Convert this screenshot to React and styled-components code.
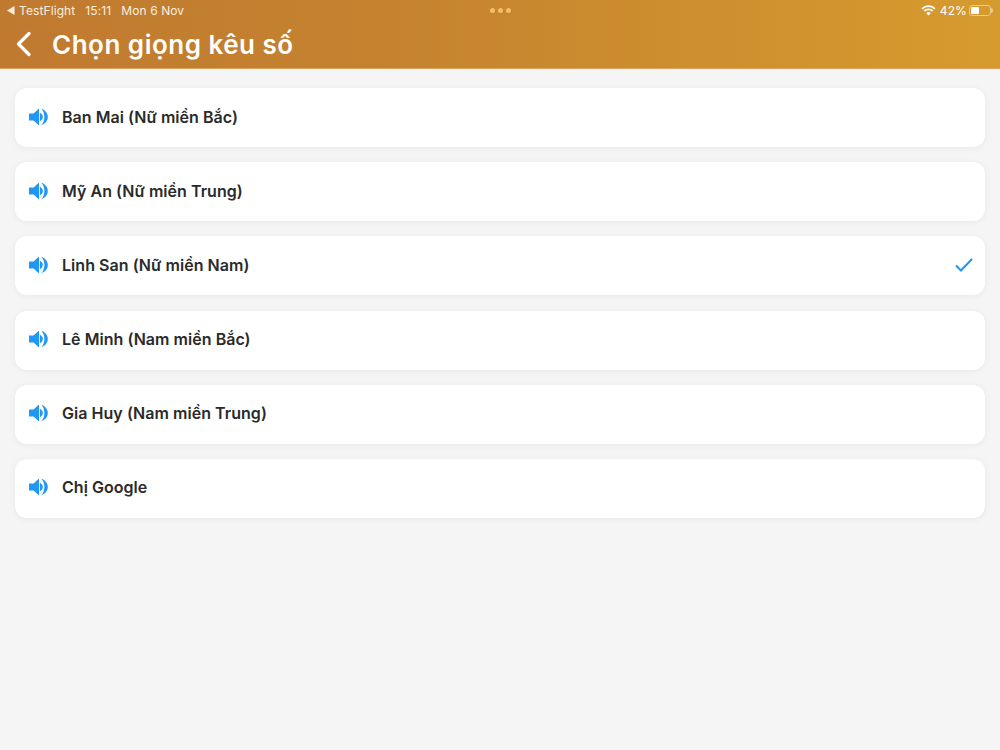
import styled, { createGlobalStyle } from 'styled-components';

const GlobalStyle = createGlobalStyle`
	html, body {
		margin: 0;
		padding: 0;
		background: #f4f4f4;
	}
	body {
		font-family: Inter, "Noto Sans", "Liberation Sans", sans-serif;
	}
`;

const Page = styled.div`
	width: 1000px;
	height: 750px;
	overflow: hidden;
	background: #f5f5f5;
`;

const Header = styled.header`
	height: 69px;
	box-sizing: border-box;
	background: linear-gradient(90deg, #c07a30 0%, #c5832f 40%, #d69b2e 100%);
	color: #fff;
	border-bottom: 1px solid #dca25f;
`;

const StatusBar = styled.div`
	height: 20px;
	padding: 0 7px 0 7px;
	display: grid;
	grid-template-columns: 1fr auto 1fr;
	align-items: center;
	font-size: 12px;
	letter-spacing: 0.1px;
	color: #fbeedd;
`;

const StatusLeft = styled.div`
	display: flex;
	align-items: center;
`;

const BackApp = styled.span`
	display: flex;
	align-items: center;
	gap: 4px;
	margin-right: 10px;
`;

const TimeText = styled.span`
	margin-right: 10px;
`;

const Dots = styled.div`
	display: flex;
	gap: 3px;
`;

const Dot = styled.span`
	width: 5px;
	height: 5px;
	border-radius: 50%;
	background: #f6bd6c;
`;

const StatusRight = styled.div`
	display: flex;
	align-items: center;
	justify-content: flex-end;
	gap: 4px;
`;

const Percent = styled.span`
	color: #fff;
	margin-right: -2px;
`;

const Battery = styled.span`
	width: 22px;
	height: 11px;
	box-sizing: border-box;
	padding: 1px;
	border: 1px solid #e9c98f;
	border-radius: 3px;
	display: flex;
	margin-right: 2px;
	position: relative;
	&::after {
		content: '';
		position: absolute;
		right: -3px;
		top: 2px;
		width: 2px;
		height: 5px;
		border-radius: 0 2px 2px 0;
		background: #e9c98f;
	}
`;

const BatteryLevel = styled.span`
	width: 8px;
	background: #fff;
	border-radius: 1px;
`;

const TitleRow = styled.div`
	height: 48px;
	display: flex;
	align-items: center;
	padding-left: 15px;
	gap: 21px;
`;

const BackButton = styled.button`
	padding: 0;
	border: 0;
	background: none;
	display: flex;
`;

const Title = styled.h1`
	margin: 0;
	font-size: 26px;
	font-weight: 600;
	letter-spacing: 0.5px;
	color: #fff;
`;

const VoiceList = styled.ul`
	list-style: none;
	margin: 0;
	padding: 19px 15px 0;
	display: flex;
	flex-direction: column;
	gap: 15.2px;
`;

const VoiceRow = styled.li`
	height: 59px;
	box-sizing: border-box;
	padding: 0 11px 2px 14px;
	display: flex;
	align-items: center;
	background: #fff;
	border-radius: 12px;
	box-shadow: 0 1px 6px rgba(0, 0, 0, 0.06);
`;

const VoiceName = styled.span`
	flex: 1;
	margin-left: 14px;
	font-size: 16px;
	font-weight: 600;
	letter-spacing: 0.04px;
	color: #2a2a2a;
`;

const SpeakerIcon = () => (
	<svg width="19" height="18" viewBox="0 0 19 18">
		<path d="M0 5.4h4.6L10 .6v16.8l-5.4-4.8H0z" fill="#2196f3" />
		<path d="M10.8 4.8c1.9.7 3 2.3 3 4.2s-1.1 3.5-3 4.2z" fill="#2196f3" />
		<path d="M12.4.8C16.2 2.2 18.8 5.300 18.8 9s-2.600 6.800-6.400 8.200c1.900-2.200 3-5 3-8.200s-1.100-6-3-8.200z" fill="#2196f3" />
	</svg>
);

const voices = [
	{ name: 'Ban Mai (Nữ miền Bắc)' },
	{ name: 'Mỹ An (Nữ miền Trung)' },
	{ name: 'Linh San (Nữ miền Nam)', selected: true },
	{ name: 'Lê Minh (Nam miền Bắc)' },
	{ name: 'Gia Huy (Nam miền Trung)' },
	{ name: 'Chị Google' },
];

const App = () => {
	return (
		<Page>
			<GlobalStyle />
			<Header>
				<StatusBar>
					<StatusLeft>
						<BackApp>
							<svg width="8" height="9" viewBox="0 0 8 9">
								<path d="M7.5 0v9L0 4.5z" fill="#fbeedd" />
							</svg>
							TestFlight
						</BackApp>
						<TimeText>15:11</TimeText>
						<span>Mon 6 Nov</span>
					</StatusLeft>
					<Dots>
						<Dot />
						<Dot />
						<Dot />
					</Dots>
					<StatusRight>
						<svg width="15" height="11" viewBox="0 0 15 11">
							<path d="M1 3.8a9.2 9.2 0 0 1 13 0" fill="none" stroke="#fff" strokeWidth="1.7" />
							<path d="M3.3 6.1a6 6 0 0 1 8.4 0" fill="none" stroke="#fff" strokeWidth="1.7" />
							<path d="M7.5 10.6 5.3 8.2a3.1 3.1 0 0 1 4.4 0z" fill="#fff" />
						</svg>
						<Percent>42%</Percent>
						<Battery>
							<BatteryLevel />
						</Battery>
					</StatusRight>
				</StatusBar>
				<TitleRow>
					<BackButton>
						<svg width="16" height="26" viewBox="0 0 16 26">
							<path d="M14 2.5 3.5 13 14 23.5" fill="none" stroke="#fff" strokeWidth="3.2" strokeLinecap="round" strokeLinejoin="round" />
						</svg>
					</BackButton>
					<Title>Chọn giọng kêu số</Title>
				</TitleRow>
			</Header>
			<VoiceList>
				{voices.map((voice) => (
					<VoiceRow key={voice.name}>
						<SpeakerIcon />
						<VoiceName>{voice.name}</VoiceName>
						{voice.selected && (
							<svg width="20" height="16" viewBox="0 0 20 16">
								<path d="M2 8.500 7 13.500 18 2" fill="none" stroke="#2196f3" strokeWidth="2" />
							</svg>
						)}
					</VoiceRow>
				))}
			</VoiceList>
		</Page>
	);
};

export default App;
